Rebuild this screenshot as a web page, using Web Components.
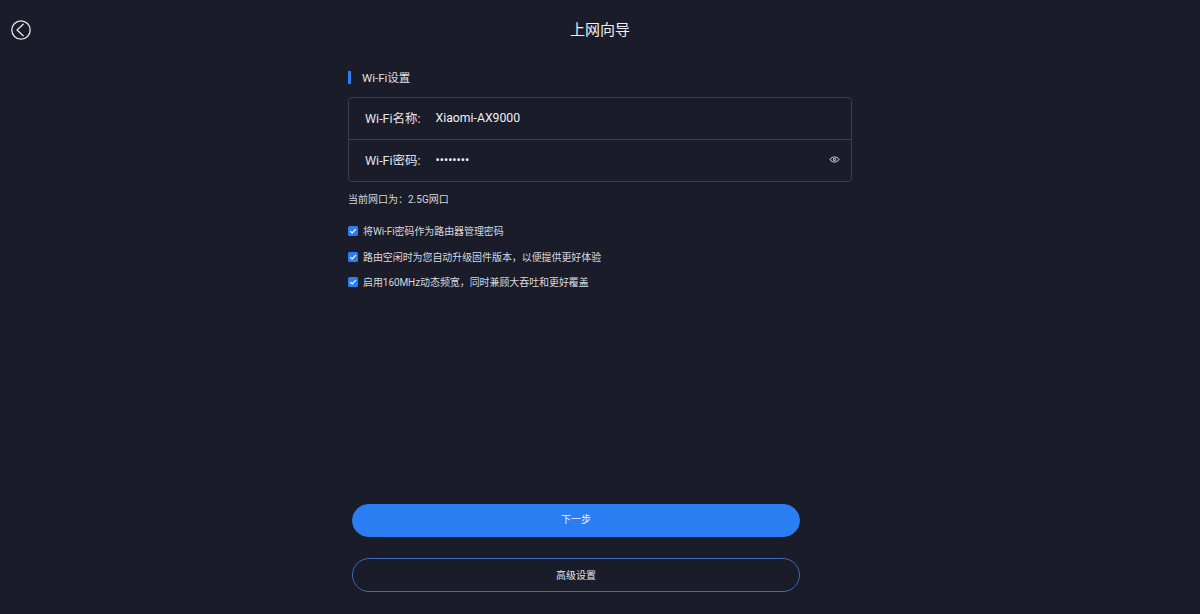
<!DOCTYPE html>
<html lang="zh">
<head>
<meta charset="utf-8">
<title>上网向导</title>
<style>
  html, body { margin: 0; height: 100%; background: #1a1c2a; }
  body { font-family: Roboto, "Noto Sans CJK SC", sans-serif; color: #e4e5e8; overflow: hidden; }
</style>
</head>
<body>
<wizard-page>
  <wizard-header slot="header">上网向导</wizard-header>
  <section-title>Wi-Fi设置</section-title>
  <field-card>
    <field-row label="Wi-Fi名称:" value="Xiaomi-AX9000"></field-row>
    <field-row label="Wi-Fi密码:" value="••••••••" secret></field-row>
  </field-card>
  <port-note>当前网口为&#xFF1A;2.5G网口</port-note>
  <check-row>将Wi-Fi密码作为路由器管理密码</check-row>
  <check-row>路由空闲时为您自动升级固件版本&#xFF0C;以便提供更好体验</check-row>
  <check-row>启用160MHz动态频宽&#xFF0C;同时兼顾大吞吐和更好覆盖</check-row>
  <pill-button slot="actions" primary>下一步</pill-button>
  <pill-button slot="actions">高级设置</pill-button>
</wizard-page>

<script>
// page frame: header on top, form column, buttons at the bottom
class WizardPage extends HTMLElement {
  constructor() {
    super();
    this.attachShadow({ mode: 'open' }).innerHTML = `
      <style>
        :host { display: flex; flex-direction: column; height: 614px; box-sizing: border-box; }
        .main { width: 504px; margin: 0 auto; flex: 1; display: flex; flex-direction: column; }
        .actions { display: flex; flex-direction: column; gap: 21px; width: 448px; padding: 0 0 22px 4px; margin-top: auto; }
      </style>
      <slot name="header"></slot>
      <div class="main">
        <slot></slot>
        <div class="actions"><slot name="actions"></slot></div>
      </div>`;
  }
}

class WizardHeader extends HTMLElement {
  constructor() {
    super();
    this.attachShadow({ mode: 'open' }).innerHTML = `
      <style>
        :host { display: grid; grid-template-columns: 1fr auto 1fr; align-items: center; height: 60px; padding-left: 11px; padding-right: 11px; }
        svg { display: block; width: 20px; height: 20px; }
        .title { font-size: 15px; line-height: 20px; color: #eef0f2; }
      </style>
      <svg viewBox="0 0 20 20" fill="none" stroke="#e6e7ea" stroke-width="1.3">
        <circle cx="10" cy="10" r="9.2"/>
        <path d="M12.2 4.3 6 10l6.2 5.7" stroke-linecap="round" stroke-linejoin="round"/>
      </svg>
      <div class="title"><slot></slot></div>
      <span></span>`;
  }
}

class SectionTitle extends HTMLElement {
  constructor() {
    super();
    this.attachShadow({ mode: 'open' }).innerHTML = `
      <style>
        :host { display: flex; align-items: center; height: 13px; margin-top: 11px; margin-bottom: 13px; font-size: 11.5px; color: #dfe0e4; }
        i { width: 3px; height: 13px; background: #2b7df2; margin-right: 11px; }
        span { position: relative; top: -1px; }
      </style>
      <i></i><span><slot></slot></span>`;
  }
}

class FieldCard extends HTMLElement {
  constructor() {
    super();
    this.attachShadow({ mode: 'open' }).innerHTML = `
      <style>
        :host { display: flex; flex-direction: column; box-sizing: border-box; height: 85px; border: 1px solid #3a3d4b; border-radius: 4px; }
        ::slotted(field-row:first-child) { flex: none; height: 42px; border-bottom: 1px solid #3a3d4b; }
        ::slotted(field-row:last-child) { flex: 1; }
      </style>
      <slot></slot>`;
  }
}

class FieldRow extends HTMLElement {
  constructor() {
    super();
    const secret = this.hasAttribute('secret');
    this.attachShadow({ mode: 'open' }).innerHTML = `
      <style>
        :host { display: flex; align-items: center; box-sizing: border-box; padding: 0 11px 2px 16px; font-size: 12.5px; color: #e4e5e8; }
        .label { width: 70.5px; }
        .value { flex: 1; color: #eef0f2; font-size: 12.25px; }
        .secret { font-size: 12.5px; }
        svg { width: 11px; height: 11px; }
      </style>
      <span class="label">${this.getAttribute('label')}</span>
      <span class="value${secret ? ' secret' : ''}">${this.getAttribute('value')}</span>
      ${secret ? `<svg viewBox="0 0 12 12" fill="none" stroke="#a6a8b0" stroke-width="1.3">
        <path d="M1 6C2.2 4.1 3.9 3.1 6 3.1S9.8 4.1 11 6C9.8 7.9 8.1 8.9 6 8.9S2.2 7.9 1 6Z"/>
        <circle cx="6" cy="6" r="1.2"/>
      </svg>` : ''}`;
  }
}

class PortNote extends HTMLElement {
  constructor() {
    super();
    this.attachShadow({ mode: 'open' }).innerHTML = `
      <style>
        :host { display: block; margin-top: 11px; margin-bottom: 17px; font-size: 10px; line-height: 14px; color: #d6d7db; }
      </style>
      <slot></slot>`;
  }
}

class CheckRow extends HTMLElement {
  constructor() {
    super();
    this.attachShadow({ mode: 'open' }).innerHTML = `
      <style>
        :host { display: flex; align-items: center; height: 14px; margin-bottom: 11.5px; font-size: 10px; letter-spacing: -0.08px; color: #d6d7db; }
        svg { width: 10px; height: 10px; margin-right: 5px; flex: none; }
        span { position: relative; top: -0.5px; }
      </style>
      <svg viewBox="0 0 10 10">
        <rect width="10" height="10" rx="1.5" fill="#2b7df2"/>
        <path d="M2.2 5.1 4.2 7l3.6-3.9" fill="none" stroke="#fff" stroke-width="1.2"/>
      </svg>
      <span><slot></slot></span>`;
  }
}

class PillButton extends HTMLElement {
  constructor() {
    super();
    this.attachShadow({ mode: 'open' }).innerHTML = `
      <style>
        :host { display: flex; align-items: center; justify-content: center; box-sizing: border-box; height: 34px; padding-bottom: 1px; border-radius: 17px; font-size: 10px; color: #e4e5e8; border: 1px solid #3a6bb5; }
        :host([primary]) { height: 33px; padding-bottom: 4px; background: #2b7df2; border-color: #2b7df2; color: #f0f5ff; }
      </style>
      <slot></slot>`;
  }
}

customElements.define('wizard-page', WizardPage);
customElements.define('wizard-header', WizardHeader);
customElements.define('section-title', SectionTitle);
customElements.define('field-card', FieldCard);
customElements.define('field-row', FieldRow);
customElements.define('port-note', PortNote);
customElements.define('check-row', CheckRow);
customElements.define('pill-button', PillButton);
</script>
</body>
</html>
